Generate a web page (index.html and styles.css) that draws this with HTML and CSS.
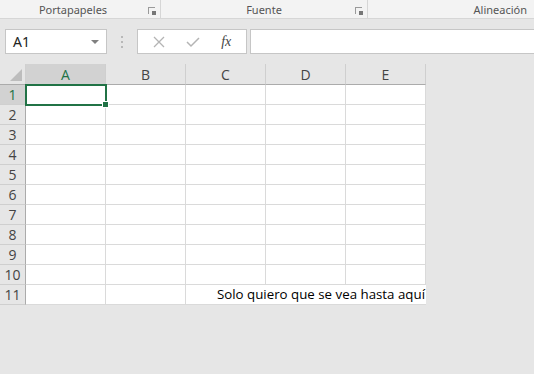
FILE: index.html
```html
<!DOCTYPE html>
<html lang="es">

<head>
    <meta charset="UTF-8">
    <title>Libro1 - Excel</title>
    <link rel="stylesheet" href="styles.css">
</head>

<body>
    <div class="ribbon">
        <div class="group g-clip">
            <span class="label">Portapapeles</span>
            <span class="launcher"></span>
        </div>
        <div class="group g-font">
            <span class="label">Fuente</span>
            <span class="launcher"></span>
        </div>
        <div class="group g-align">
            <span class="label">Alineación</span>
        </div>
    </div>

    <div class="formula-row">
        <div class="namebox">
            <span>A1</span>
            <span class="arrow"></span>
        </div>
        <div class="grip">
            <i></i><i></i><i></i>
        </div>
        <div class="fbtns">
            <svg width="12" height="12" viewBox="0 0 12 12">
                <path d="M1 1 L11 11 M11 1 L1 11" stroke="#b4b4b4" stroke-width="1.3" fill="none" />
            </svg>
            <svg width="14" height="12" viewBox="0 0 14 12">
                <path d="M1 6 L5 10 L13 2" stroke="#b4b4b4" stroke-width="1.5" fill="none" />
            </svg>
            <span class="fx">fx</span>
        </div>
        <div class="finput"></div>
    </div>

    <div class="sheet">
        <div class="corner"><span></span></div>
        <div class="ch active">A</div>
        <div class="ch">B</div>
        <div class="ch">C</div>
        <div class="ch">D</div>
        <div class="ch">E</div>
    </div>
    <script>
        // rows 1..11, cell A1 selected, text on row 11
        let sheet = document.querySelector('.sheet');
        for (let r = 1; r <= 11; r++) {
            let rh = document.createElement('div');
            rh.className = r == 1 ? 'rh active' : 'rh';
            rh.innerHTML = r;
            sheet.appendChild(rh);
            if (r == 11) {
                sheet.appendChild(makeCell(''));
                sheet.appendChild(makeCell(''));
                let c = makeCell('Solo quiero que se vea hasta aquí');
                c.classList.add('wide');
                sheet.appendChild(c);
                continue;
            }
            for (let c = 0; c < 5; c++) {
                let cell = makeCell('');
                if (r == 1 && c == 0) cell.classList.add('sel');
                sheet.appendChild(cell);
            }
        }

        function makeCell(txt) {
            let d = document.createElement('div');
            d.className = 'cell';
            d.innerHTML = txt;
            return d;
        }
    </script>
</body>

</html>
```
FILE: styles.css
```css
body {
    margin: 0;
    background-color: #e6e6e6;
    font-family: "Noto Sans", sans-serif;
    width: 534px;
    height: 374px;
    overflow: hidden;
}

.ribbon {
    display: flex;
    height: 18px;
    background-color: #f3f3f3;
    border-bottom: 1px solid #d6d6d6;
    font-size: 11px;
    color: #555;
}

.group {
    position: relative;
    display: flex;
    justify-content: center;
    align-items: center;
    height: 18px;
    border-right: 1px solid #d6d6d6;
}

.g-clip {
    width: 160px;
}

.g-clip .label {
    margin-right: 14px;
}

.g-font {
    width: 206px;
}

.g-align {
    flex: 1;
    border-right: none;
    justify-content: flex-end;
    padding-right: 7px;
}

.launcher {
    position: absolute;
    right: 5px;
    top: 7px;
    width: 6px;
    height: 6px;
    border-left: 1px solid #9a9a9a;
    border-top: 1px solid #9a9a9a;
}

.launcher::after {
    content: '';
    position: absolute;
    right: -1px;
    bottom: -1px;
    width: 4px;
    height: 4px;
    background-color: #777;
}

.formula-row {
    display: flex;
    align-items: center;
    height: 25px;
    margin-top: 10px;
    padding-left: 5px;
}

.namebox {
    display: flex;
    justify-content: space-between;
    align-items: center;
    box-sizing: border-box;
    width: 102px;
    height: 25px;
    padding: 0 7px 0 7px;
    background-color: #fff;
    border: 1px solid #c6c6c6;
    font-size: 14px;
    color: #222;
}

.arrow {
    width: 0;
    height: 0;
    border-left: 4px solid transparent;
    border-right: 4px solid transparent;
    border-top: 4px solid #808080;
}

.grip {
    display: flex;
    flex-direction: column;
    gap: 3px;
    width: 30px;
    align-items: center;
}

.grip i {
    width: 2px;
    height: 2px;
    background-color: #b8b8b8;
}

.fbtns {
    display: flex;
    align-items: center;
    justify-content: space-around;
    box-sizing: border-box;
    width: 110px;
    height: 25px;
    background-color: #fff;
    border: 1px solid #c6c6c6;
    padding: 0 4px;
}

.fx {
    font-family: "Liberation Serif", serif;
    font-style: italic;
    font-size: 14px;
    color: #444;
}

.finput {
    flex: 1;
    height: 25px;
    box-sizing: border-box;
    margin-left: 3px;
    background-color: #fff;
    border: 1px solid #c6c6c6;
    border-right: none;
}

.sheet {
    display: grid;
    grid-template-columns: 26px repeat(5, 80px);
    grid-template-rows: 21px repeat(11, 20px);
    width: 426px;
    margin-top: 10px;
    font-family: "Open Sans", sans-serif;
}

.corner,
.ch,
.rh {
    box-sizing: border-box;
    background-color: #e6e6e6;
    color: #444;
    font-size: 14px;
    display: flex;
    align-items: center;
    justify-content: center;
}

.corner {
    position: relative;
    border-right: 1px solid #d0d0d0;
    border-bottom: 1px solid #ababab;
}

.corner span {
    position: absolute;
    right: 3px;
    bottom: 3px;
    width: 0;
    height: 0;
    border-left: 12px solid transparent;
    border-bottom: 12px solid #bdbdbd;
}

.ch {
    border-right: 1px solid #cfcfcf;
    border-bottom: 1px solid #ababab;
}

.rh {
    border-right: 1px solid #ababab;
    border-bottom: 1px solid #cfcfcf;
}

.ch.active,
.rh.active {
    background-color: #d2d2d2;
    color: #217346;
}

.cell {
    position: relative;
    box-sizing: border-box;
    background-color: #fff;
    border-right: 1px solid #dadada;
    border-bottom: 1px solid #dadada;
    font-size: 13.3px;
    color: #000;
    display: flex;
    align-items: flex-end;
    padding-bottom: 1px;
}

.cell.wide {
    grid-column: span 3;
    justify-content: flex-end;
    border-right: none;
    padding-right: 1px;
    white-space: nowrap;
}

.cell.sel {
    outline: 2px solid #217346;
    outline-offset: -1px;
    z-index: 1;
}

.cell.sel::after {
    content: '';
    position: absolute;
    right: -4px;
    bottom: -4px;
    width: 5px;
    height: 5px;
    background-color: #217346;
    border: 1px solid #fff;
}
```
